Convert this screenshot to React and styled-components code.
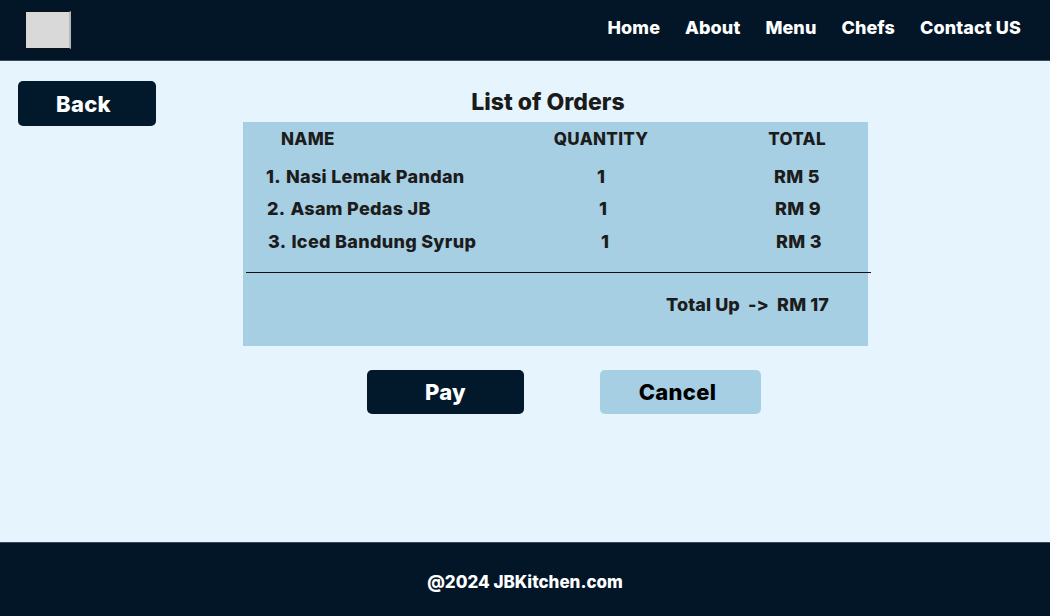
import React from 'react';
import styled, { createGlobalStyle } from 'styled-components';

const GlobalStyle = createGlobalStyle`
  * {
    box-sizing: border-box;
  }
  body {
    margin: 0;
    font-family: Inter, "Open Sans", sans-serif;
    font-feature-settings: "calt" 0, "liga" 0;
    background: #e6f5fd;
  }
`;

const Page = styled.div`
  min-height: 100vh;
  display: flex;
  flex-direction: column;
`;

const Header = styled.header`
  height: 61px;
  background: #021627;
  border-bottom: 1px solid #3b4d5c;
  display: flex;
  align-items: center;
  justify-content: space-between;
  padding: 0 29px 6px 25px;
`;

const Logo = styled.div`
  width: 46px;
  height: 38px;
  margin-top: 5px;
  background: #d9d9d9;
  border: 1px solid #111;
  border-right: 2px solid #b8b8b8;
`;

const Nav = styled.nav`
  display: flex;
  gap: 25px;
`;

const NavLink = styled.a`
  color: #fff;
  font-size: 18px;
  font-weight: 850;
  letter-spacing: 0.1px;
  text-decoration: none;
`;

const Main = styled.main`
  flex: 1;
  display: grid;
  grid-template-columns: 138px 625px;
  column-gap: 87px;
  align-items: start;
  padding: 20px 18px;
`;

const Button = styled.button`
  border: none;
  border-radius: 5px;
  height: ${(p) => p.$height || 44}px;
  width: ${(p) => p.$width}px;
  background: ${(p) => (p.$light ? '#a6cfe3' : '#02192c')};
  color: ${(p) => (p.$light ? '#000' : '#fff')};
  font-family: inherit;
  font-feature-settings: inherit;
  font-size: 22px;
  font-weight: 850;
  letter-spacing: 0.3px;
  padding: 0 ${(p) => p.$shift || 0}px 0 0;
  cursor: pointer;
`;

const Content = styled.section`
  display: flex;
  flex-direction: column;
`;

const Title = styled.h1`
  margin: 0;
  height: 41px;
  line-height: 42px;
  padding-right: 15px;
  text-align: center;
  font-size: 23px;
  font-weight: 850;
  color: #1b1b1b;
`;

const Panel = styled.div`
  background: #a6cfe3;
  height: 224px;
  display: flex;
  flex-direction: column;
  color: #1c1c1c;
`;

const Grid = styled.div`
  display: grid;
  grid-template-columns: 275px 120px 1fr;
  padding-left: 23px;
  font-weight: 850;
`;

const Cell = styled.div`
  height: ${(p) => p.$h}px;
  display: flex;
  align-items: center;
  justify-content: ${(p) => (p.$left ? 'flex-start' : 'center')};
  padding-left: ${(p) => p.$pl || 0}px;
  font-size: 18px;
  letter-spacing: 0.3px;
  white-space: pre;
`;

const Num = styled.span`
  margin-right: 5px;
`;

const HeadCell = styled(Cell)`
  height: 39px;
  padding-bottom: 5px;
  font-size: 17px;
`;

const Divider = styled.div`
  height: 1px;
  background: #111;
  width: 100%;
  margin: 15px 0 0 3px;
`;

const TotalRow = styled.div`
  display: flex;
  justify-content: flex-end;
  align-items: center;
  height: 62px;
  padding-right: 39px;
  font-size: 18px;
  font-weight: 850;
  letter-spacing: 0.1px;
  white-space: pre;
`;

const Actions = styled.div`
  display: flex;
  justify-content: center;
  gap: 76px;
  margin-top: 24px;
  padding-left: 17px;
`;

const Footer = styled.footer`
  height: 74px;
  background: #021627;
  border-top: 1px solid #3b4d5c;
  display: flex;
  align-items: center;
  justify-content: center;
  padding-top: 5px;
  color: #fff;
  font-size: 17px;
  font-weight: 850;
`;

const orders = [
  { no: '1.', name: 'Nasi Lemak Pandan', qty: 1, total: 'RM 5', shift: 0, h: 31 },
  { no: '2.', name: 'Asam Pedas JB', qty: 1, total: 'RM 9', shift: 2, h: 33 },
  { no: '3.', name: 'Iced Bandung Syrup', qty: 1, total: 'RM 3', shift: 4, h: 32 },
];

const navItems = ['Home', 'About', 'Menu', 'Chefs', 'Contact US'];

export default function App() {
  return (
    <Page>
      <GlobalStyle />
      <Header>
        <Logo />
        <Nav>
          {navItems.map((item) => (
            <NavLink key={item} href="#">
              {item}
            </NavLink>
          ))}
        </Nav>
      </Header>
      <Main>
        <Button $width={138} $height={45} $shift={7}>
          Back
        </Button>
        <Content>
          <Title>List of Orders</Title>
          <Panel>
            <Grid>
              <HeadCell $left $pl={15}>
                NAME
              </HeadCell>
              <HeadCell>QUANTITY</HeadCell>
              <HeadCell $pl={65}>TOTAL</HeadCell>
              {orders.map((o) => (
                <React.Fragment key={o.no}>
                  <Cell $left $pl={o.shift / 2} $h={o.h}>
                    <Num>{o.no}</Num>
                    {o.name}
                  </Cell>
                  <Cell $pl={o.shift * 2} $h={o.h}>
                    {o.qty}
                  </Cell>
                  <Cell $pl={65 + o.shift} $h={o.h}>
                    {o.total}
                  </Cell>
                </React.Fragment>
              ))}
            </Grid>
            <Divider />
            <TotalRow>Total Up  -{'>'}  RM 17</TotalRow>
          </Panel>
          <Actions>
            <Button $width={157}>Pay</Button>
            <Button $width={161} $light $shift={6}>
              Cancel
            </Button>
          </Actions>
        </Content>
      </Main>
      <Footer>@2024 JBKitchen.com</Footer>
    </Page>
  );
}
